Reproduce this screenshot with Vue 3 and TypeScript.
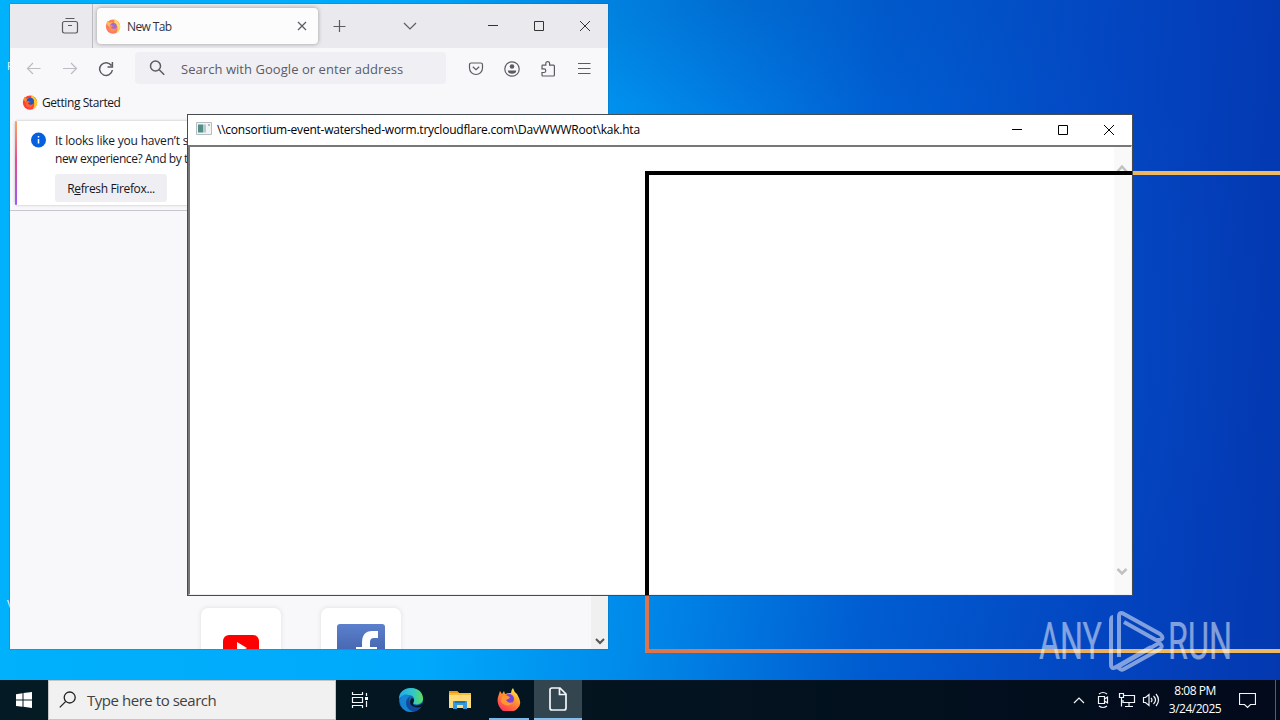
<script setup lang="ts">
interface BrowserAction {
  name: string
  paths: string[]
}

const browserActions: BrowserAction[] = [
  { name: 'pocket', paths: ['M3.2 2h9.6q1.7 0 1.7 1.7V7a6.5 6.5 0 0 1-13 0V3.7q0-1.7 1.7-1.7z', 'M4.8 5.8 8 8.7l3.2-2.9'] },
  { name: 'account', paths: ['M8 .8a7.2 7.2 0 1 0 0 14.4A7.2 7.2 0 0 0 8 .8z'] },
  { name: 'extensions', paths: ['M2 7.5V5q0-.8.8-.8h3V2.5a1.9 1.9 0 0 1 3.8 0v1.7h3.9q.9 0 .9.9v9q0 .9-.9.9H2.9q-.9 0-.9-.9v-2.6h2a1.8 1.8 0 0 0 0-3.6H2z'] },
  { name: 'menu', paths: ['M2 2.5h12.500M2 7.500h12.500M2 12.500h12.500'] },
]
</script>

<template>
  <div class="screen">
    <main class="desktop">
      <span class="label first">F</span>
      <span class="label second">V</span>
      <div class="frame"></div>

      <section class="firefox">
        <header class="tabs">
          <div class="view">
            <svg width="18" height="18" viewBox="0 0 18 18" class="line"><path d="M4.500 1.500h9M3.400 4.500h11.200q1.900 0 1.900 1.900v7.700q0 1.900-1.900 1.900H3.400q-1.900 0-1.900-1.900V6.400q0-1.900 1.900-1.900zM7 8.500h4" /></svg>
          </div>
          <div class="tab">
            <svg class="fox" width="16" height="16" viewBox="0 0 24 24">
              <circle cx="12" cy="13" r="10.700" fill="#ff6545" /><path d="M14 1q8 5 9 12-1 7-6 9 5-10-3-15z" fill="#ffd34b" /><path d="M2 8l2-4 3 3 4-1-1 4 3 2-5 4z" fill="#ffb13b" /><circle cx="12.500" cy="12.500" r="5" fill="#8a54d5" /><path d="M8 10l5 2-4 2q3 4 8 1-2 7-8 5-6-3-1-10z" fill="#ff7b3d" />
            </svg>
            <span class="tab-name">New Tab</span>
            <svg width="10" height="10" viewBox="0 0 10 10" class="line"><path d="M1 1l8 8M9 1 1 9" /></svg>
          </div>
          <svg class="line plus" width="14" height="14" viewBox="0 0 14 14"><path d="M6.500 1v12M.500 7.500h12" /></svg>
          <svg class="line all" width="14" height="14" viewBox="0 0 14 14"><path d="M1 4 7 10l6-6" /></svg>
          <div class="controls">
            <svg width="12" height="12" viewBox="0 0 12 12"><path d="M1 5.500h10" /></svg>
            <svg width="12" height="12" viewBox="0 0 12 12"><path d="M1.500 1.500h9v9h-9z" /></svg>
            <svg width="12" height="12" viewBox="0 0 12 12"><path d="M1 1l10 10M11 1 1 11" /></svg>
          </div>
        </header>

        <nav class="toolbar">
          <div class="history">
            <svg class="line off" width="16" height="16" viewBox="0 0 16 16"><path d="M14.500 7.500H1.500M7 2 1.500 7.500 7 13" /></svg>
            <svg class="line off" width="16" height="16" viewBox="0 0 16 16"><path d="M1 7.500h13.500M9 2l5.500 5.500L9 13" /></svg>
            <svg class="line reload" width="16" height="16" viewBox="0 0 16 16"><path d="M13.400 4.500A6.400 6.400 0 1 0 14.400 9M14.400 1v5H9.500" /></svg>
          </div>
          <div class="address">
            <svg class="line reload" width="16" height="16" viewBox="0 0 16 16"><circle cx="6.500" cy="6" r="5" /><path d="m10.200 9.700 5 5" /></svg>
            <span>Search with Google or enter address</span>
          </div>
          <div class="actions">
            <svg v-for="action in browserActions" :key="action.name" class="line" width="16" height="16" viewBox="0 0 16 16">
              <path v-for="path in action.paths" :key="path" :d="path" />
              <g v-if="action.name === 'account'" class="solid"><circle cx="8" cy="5.500" r="2.300" /><path d="M3.800 9.500h8.400q0 3.200-4.200 3.200t-4.200-3.200z" /></g>
            </svg>
          </div>
        </nav>

        <div class="bookmarks">
          <svg width="16" height="16" viewBox="0 0 24 24">
            <circle cx="12" cy="13" r="10.700" fill="#ff3f37" /><path d="M14 1q8 5 9 12-1 7-7 10 6-10-2-16z" fill="#ffc928" /><path d="M2 8l2-4 3 3 4-1-1 4 3 2-5 4z" fill="#ff8b26" /><circle cx="12.500" cy="11" r="5.500" fill="#2457bd" /><path d="M8 10l5 2-4 2q3 4 8 1-2 7-8 5-6-3-1-10z" fill="#ff6131" />
          </svg>
          <span>Getting Started</span>
        </div>

        <div class="notice">
          <svg width="16" height="16" viewBox="0 0 16 16"><circle cx="8.500" cy="8" r="7.500" fill="#0560df" /><path d="M8.500 7v4.500M8.500 4v1.500" stroke="#fff" stroke-width="1.500" /></svg>
          <div class="message">
            <p class="one">It looks like you haven’t s</p>
            <p class="two">new experience? And by t</p>
            <button>R<u>e</u>fresh Firefox...</button>
          </div>
        </div>

        <div class="page">
          <div class="shortcuts">
            <div class="tile">
              <svg width="36" height="26" viewBox="0 0 36 26"><rect width="36" height="26" rx="6" fill="#f00" /><path d="m14 7 10 6-10 6z" fill="#fff" /></svg>
            </div>
            <div class="tile facebook">
              <svg width="48" height="48" viewBox="0 0 48 48"><defs><linearGradient id="blue" x2="0" y2="1"><stop stop-color="#5c80cc" /><stop offset="1" stop-color="#35549b" /></linearGradient></defs><rect width="48" height="48" rx="3" fill="url(#blue)" /><path d="M25 48V31h-6v-8h6v-4q0-12 10-12h6v7h-4q-4 0-4 4v5h7v8h-7v17z" fill="#fff" /></svg>
            </div>
          </div>
          <div class="page-scroll"><svg width="10" height="7" viewBox="0 0 10 7"><path d="m1 1 4 4 4-4" /></svg></div>
        </div>
      </section>

      <section class="hta">
        <header class="title">
          <svg width="16" height="14" viewBox="0 0 16 14"><path d="M.500.500h15v12H.500z" fill="#f0f4f5" stroke="#b5bdc1" /><path d="M2 2.500h5v8H2z" fill="#508f86" /><path d="M7 2.500h3v8H7z" fill="#b9cacb" /><path d="M12 2h2v2h-2z" fill="#b0bdc3" /></svg>
          <span>\\consortium-event-watershed-worm.trycloudflare.com\DavWWWRoot\kak.hta</span>
          <div class="controls dark">
            <svg width="12" height="12" viewBox="0 0 12 12"><path d="M1 5.500h10" /></svg>
            <svg width="12" height="12" viewBox="0 0 12 12"><path d="M1.500 1.500h9v9h-9z" /></svg>
            <svg width="12" height="12" viewBox="0 0 12 12"><path d="M1 1l10 10M11 1 1 11" /></svg>
          </div>
        </header>
        <div class="document">
          <div class="scroll">
            <svg width="12" height="9" viewBox="0 0 12 9"><path d="m1.500 7.500 4.500-5 4.500 5" /></svg>
            <svg width="12" height="9" viewBox="0 0 12 9"><path d="m1.500 2 4.500 4.500L10.500 2" /></svg>
          </div>
        </div>
        <div class="selection"></div>
      </section>

      <svg class="watermark" width="220" height="75" viewBox="0 0 220 75">
        <text x="3" y="54" textLength="63" lengthAdjust="spacingAndGlyphs">ANY</text>
        <text x="132" y="54" textLength="64" lengthAdjust="spacingAndGlyphs">RUN</text>
        <path d="M77 12q-2 0-2 4v43q0 6 5 3l35-20M83 52V12q0-6 5-3l36 20q5 4 0 6l-4 0L88 17M80 63l43-25q5 3 1 6L88 64q-4 2-5-2" />
      </svg>
    </main>

    <footer class="taskbar">
      <div class="start"><svg width="16" height="16" viewBox="0 0 16 16"><path d="m0 2.200 6.500-1v6.300H0zM7.500 1.100 16 0v7.500H7.500zM0 8.500h6.500v6.300L0 13.900zM7.500 8.500H16V16l-8.500-1.200z" fill="#fff" /></svg></div>
      <div class="search">
        <svg width="18" height="18" viewBox="0 0 18 18"><circle cx="10.700" cy="6.500" r="5.500" /><path d="m6.800 10.400-6 6" /></svg>
        <span>Type here to search</span>
      </div>
      <div class="app"><svg width="18" height="16" viewBox="0 0 18 16" class="white"><path d="M1.500 0v2.500h10V0M1.500 5.500h10v5h-10zM1.500 16v-2.500h10V16M15.500 1v3M15.500 9v6" /><path d="M14 5h3v3h-3z" fill="#fff" stroke="none" /></svg></div>
      <div class="app edge">
        <svg width="26" height="26" viewBox="0 0 26 26"><defs><linearGradient id="edge"><stop stop-color="#23a9eb" /><stop offset=".6" stop-color="#32c9c4" /><stop offset="1" stop-color="#61dc58" /></linearGradient></defs><circle cx="13" cy="13" r="12" fill="#1268b7" /><path d="M1 12C1 5 6 1 13 1c8 0 12 5 12 11 0 5-7 7-10 4 3-5 0-8-5-8-4 0-8 2-9 4z" fill="url(#edge)" /><path d="M2 14C2 8 8 6 12 9c-6 3-5 13 3 16C7 26 2 20 2 14z" fill="#1684d5" /><path d="M12 10c-3 6 2 11 12 9-3 4-6 6-10 5-7-3-8-11-2-14z" fill="#124b9a" /><path d="M14 11c4 2 1 4 1 6 2 3 8 1 9-1l1 3c-5 3-13 1-13-4 0-2 1-3 2-4z" fill="#031924" /></svg>
      </div>
      <div class="app"><svg width="22" height="20" viewBox="0 0 22 20"><path d="M0 1h8l2 2h12v15H0z" fill="#f6bd38" /><path d="M0 5h22v13H0z" fill="#ffdc79" /><path d="M0 1h8l2 2H0z" fill="#e89a18" /><path d="M4 11h14v8h-4v-4H8v4H4z" fill="#3499da" /><path d="M6 11h10v2H6z" fill="#1977b8" /></svg></div>
      <div class="app running">
        <svg width="24" height="24" viewBox="0 0 24 24"><defs><linearGradient id="flame" x1=".8" y1="0" x2=".2" y2="1"><stop stop-color="#fff44b" /><stop offset=".4" stop-color="#ff982f" /><stop offset="1" stop-color="#ff295f" /></linearGradient></defs><path d="M1 10 3 4l2 3 2-3 1 3q3-1 5-1l1 0q0-3 2-5 1 4 4 6l1 2q5 8-1 13t-14 2Q-1 18 1 10z" fill="url(#flame)" /><circle cx="12" cy="12" r="5" fill="#7743dc" /><path d="M6 9q5-2 7 2l-4 2q2 4 7 2-3 5-8 3-7-3-2-9z" fill="#ff9631" /></svg>
      </div>
      <div class="app active"><svg class="white page-icon" width="20" height="26" viewBox="0 0 20 26"><path d="M4 2h8l6 6v14q0 2-2 2H4q-2 0-2-2V4q0-2 2-2zM11.500 2v6.500H18" /></svg></div>
      <div class="tray">
        <div class="indicator"><svg class="white" width="12" height="8" viewBox="0 0 12 8"><path d="m1 7 5-5 5 5" /></svg></div>
        <div class="indicator"><svg class="white" width="14" height="18" viewBox="0 0 14 18"><path d="M2.500 5.500h6v7h-6zM8.500 8l3-2v6l-3-2M3 3q4-3 8 0M3 15q4 3 8 0" /></svg></div>
        <div class="indicator"><svg class="white" width="18" height="16" viewBox="0 0 18 16"><path d="M6 3.500h10.500v7H5V8M11 11v3M7 14.500h8M1.500 1.500h4v4h-4zM3.500 5.500v9" /></svg></div>
        <div class="indicator"><svg class="white" width="18" height="16" viewBox="0 0 18 16"><path d="M1.500 5.500h2l3.500-3v11l-3.500-3h-2zM9 6q2 2 0 4M11.500 4q4 4 0 8M14 2q5 6 0 12" /></svg></div>
        <div class="clock"><span>8:08 PM</span><span>3/24/2025</span></div>
        <svg class="white chat" width="17" height="17" viewBox="0 0 17 17"><path d="M.500 1.500h16v11h-5L8.500 15.500l-3-3h-5z" /></svg>
      </div>
      <div class="peek"></div>
    </footer>
  </div>
</template>

<style>
body { margin: 0; overflow: hidden; }
</style>

<style scoped>
.screen { width: 1280px; height: 720px; display: flex; flex-direction: column; font-family: "Open Sans", "Noto Sans", sans-serif; overflow: hidden; }
.desktop { position: relative; height: 680px; overflow: hidden; background: radial-gradient(ellipse 420px 110px at 740px 0, rgba(0,75,175,.3), transparent 100%), radial-gradient(ellipse 680px 420px at 600px 330px, rgba(0,174,255,.12), transparent 100%), linear-gradient(92deg, #00b1fb 0%, #00a9fb 34%, #0089e9 50%, #005bd0 68%, #0345c1 86%, #0338b0 100%); }
svg { display: block; flex: none; fill: none; }
.line { stroke: #5b5b62; stroke-width: 1.2; }
.solid { fill: #5b5b62; stroke: none; }
.off { stroke: #bcbcc3; }
.reload { stroke-width: 1.5; }
.white { stroke: #f2f6fa; stroke-width: 1.2; }
.page-icon { stroke-width: 1.7; }
.label { position: absolute; left: 7px; color: #fff; font-size: 11px; line-height: 14px; }
.first { top: 59px; } .second { top: 597px; }
.frame { position: absolute; left: 645px; top: 171px; width: 650px; height: 474px; border: 4px solid; border-image: linear-gradient(90deg, #dc744c, #edba61 80%) 1; }
.firefox { position: absolute; left: 10px; top: 4px; width: 598px; height: 645px; display: flex; flex-direction: column; background: #f8f8fb; overflow: hidden; box-shadow: 0 0 1px #164969; }
.tabs { height: 44px; display: flex; align-items: center; background: #eaeaee; flex: none; }
.view { width: 83px; height: 44px; display: flex; align-items: center; justify-content: flex-end; border-right: 1px solid #bbbbc1; box-sizing: border-box; padding-right: 13px; }
.tab { width: 221px; height: 36px; margin-left: 4px; padding: 0 11px 0 8px; box-sizing: border-box; border-radius: 4px; display: flex; align-items: center; background: #fcfcfd; box-shadow: 0 0 4px #999; }
.tab-name { flex: 1; margin-left: 6px; color: #333339; font-size: 12px; letter-spacing: -.6px; }
.fox { opacity: .85; }
.plus { margin-left: 15px; } .all { margin-left: 56px; }
.controls { display: flex; gap: 34px; margin-left: auto; padding-right: 17px; stroke: #333; stroke-width: 1; }
.toolbar { height: 42px; display: flex; align-items: center; flex: none; }
.history { width: 125px; box-sizing: border-box; padding-left: 16px; display: flex; gap: 20px; }
.address { width: 311px; height: 32px; margin-top: -2px; border-radius: 4px; background: #f0f0f4; display: flex; align-items: center; gap: 16px; padding-left: 14px; box-sizing: border-box; color: #5b5b66; font-size: 13px; letter-spacing: .05px; white-space: nowrap; }
.address span { padding-top: 1px; }
.actions { display: flex; gap: 20px; margin-left: 22px; }
.bookmarks { height: 27px; box-sizing: border-box; padding: 0 0 3px 12px; display: flex; align-items: center; gap: 4px; font-size: 12px; letter-spacing: -.42px; color: #16161b; flex: none; }
.notice { position: relative; width: 582px; height: 84px; margin: 4px 5px 0; box-sizing: border-box; padding: 11px 0 0 15px; display: flex; gap: 9px; background: #fff; border-radius: 3px; box-shadow: 0 0 3px #bbb; flex: none; }
.notice::before { content: ""; position: absolute; left: 0; top: 0; width: 2px; height: 84px; border-radius: 3px; background: linear-gradient(#ffa45f, #e64b91 48%, #9859ff); }
.message { font-size: 12px; line-height: 18px; color: #19191f; letter-spacing: -.4px; white-space: nowrap; }
.message p { margin: 0; } .message .one { letter-spacing: -.2px; }
.message button { display: block; width: 112px; height: 28px; margin-top: 6px; padding: 1px 0 0; border: 0; border-radius: 3px; background: #efeff3; font: inherit; letter-spacing: -.35px; color: #15151a; }
.page { flex: 1; min-height: 0; margin-top: 5px; border-top: 1px solid #c7c7cd; display: flex; justify-content: space-between; background: #f8f8fb; }
.shortcuts { align-self: flex-end; height: 41px; display: flex; gap: 40px; margin-left: 191px; }
.tile { width: 80px; height: 80px; border-radius: 7px; background: #fff; box-shadow: 0 0 5px #ddd; display: flex; justify-content: center; padding-top: 27px; box-sizing: border-box; }
.facebook { padding-top: 16px; }
.page-scroll { width: 17px; background: #f0f0f0; display: flex; align-items: flex-end; justify-content: center; padding-bottom: 4px; }
.page-scroll path { stroke: #555; stroke-width: 2; }
.hta { position: absolute; left: 187px; top: 114px; width: 946px; height: 482px; border: 1px solid #454c52; background: #fff; box-sizing: border-box; display: flex; flex-direction: column; }
.title { height: 30px; box-sizing: border-box; padding: 0 0 2px 8px; flex: none; display: flex; align-items: center; font-size: 12px; color: #000; letter-spacing: -.23px; }
.title span { margin-left: 5px; white-space: nowrap; }
.title .dark { stroke: #000; gap: 34px; padding: 1px 17px 0 0; }
.document { flex: 1; min-height: 0; border: 2px solid; border-color: #777 #eeeef0 #eeeef0 #777; border-right-width: 1px; border-bottom-width: 1px; display: flex; justify-content: flex-end; }
.scroll { width: 17px; box-sizing: border-box; padding: 17px 2px 18px; background: #f9f9f9; display: flex; flex-direction: column; justify-content: space-between; }
.scroll path { stroke: #c1c1c1; stroke-width: 2.5; }
.selection { position: absolute; left: 457px; top: 56px; width: 483px; height: 420px; border: 4px solid #000; border-right: 0; border-bottom: 0; }
.watermark { position: absolute; left: 1036px; top: 605px; opacity: .5; overflow: visible; }
.watermark text { fill: #fff; font: 400 52px Roboto, sans-serif; stroke: #fff; stroke-width: .2; }
.watermark path { stroke: #fff; stroke-width: 4; }
.taskbar { height: 40px; flex: none; display: flex; background: linear-gradient(90deg, #031b24, #03131f 55%, #020a1b); color: #fff; }
.start, .app { width: 48px; height: 40px; display: flex; align-items: center; justify-content: center; flex: none; box-sizing: border-box; }
.app { margin-right: 1px; }
.edge { margin-left: 2px; }
.search { width: 288px; height: 40px; box-sizing: border-box; border: 1px solid #c5c5c5; background: #f1f1f1; display: flex; align-items: center; gap: 10px; padding-left: 10px; color: #414141; font-size: 15px; letter-spacing: -.46px; }
.search svg { stroke: #222; stroke-width: 1.3; }
.running { border-bottom: 2px solid #76b9ed; width: 40px; margin: 0 5px 0 4px; }
.active { background: #334650; border-bottom: 2px solid #80bfee; }
.tray { display: flex; align-items: center; margin-left: auto; }
.indicator { width: 24px; display: flex; justify-content: center; }
.clock { width: 64px; display: flex; flex-direction: column; align-items: center; font-size: 12px; line-height: 18px; letter-spacing: -.5px; }
.chat { margin-left: 12px; }
.peek { width: 1px; margin: 0 4px 0 19px; background: #53606c; }
</style>
